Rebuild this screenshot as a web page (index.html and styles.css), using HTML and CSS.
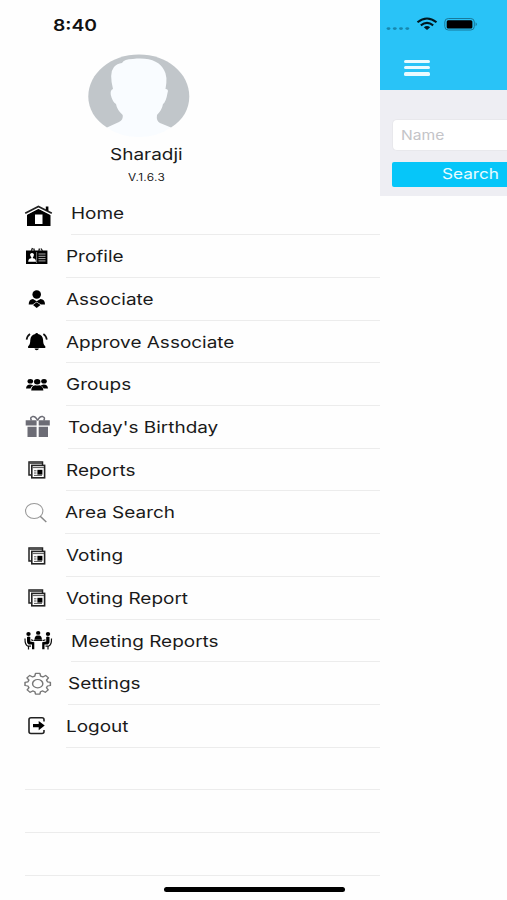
FILE: index.html
```html
<!DOCTYPE html>
<html lang="en">
<head>
    <meta charset="UTF-8">
    <meta name="viewport" content="width=device-width, initial-scale=1.0">
    <title>Menu</title>
    <link rel="stylesheet" href="styles.css">
</head>
<body>
    <!-- Shared icon for the report rows -->
    <svg class="defs" width="0" height="0">
        <symbol id="icon-report" viewBox="0 0 30 30">
            <path d="M7 20H5V7h13.5v3" fill="none" stroke="#222" stroke-width="1.5"/>
            <path d="M5 8.3h13" stroke="#444" stroke-width="1.2"/>
            <rect x="7.8" y="10.4" width="12.8" height="12.4" fill="#fff" stroke="#222" stroke-width="1.6"/>
            <path d="M8.5 12.6h11.5M10 15.8h2.5M10 18h2.5M10 20.4h8" stroke="#555" stroke-width="1"/>
            <rect x="13.4" y="14.8" width="5" height="4.8"/>
        </symbol>
    </svg>

    <div class="app">
        <!-- Side menu -->
        <div class="sidebar">
            <div class="clock"><span class="wide">8:40</span></div>
            <div class="profile">
                <svg class="avatar" width="102" height="84" viewBox="0 0 102 84">
                    <path d="M19 73.5C7 66 .3 55 .3 42.5C.3 19 23 .5 51 .5S101.3 19 101.3 42.5C101.3 55 95 66 83 73.5z" fill="#c1c6ca"/>
                    <path d="M19 73.5L31 68Q35.5 66 34.7 61Q29 56 28 50Q24.500 48 22.800 41Q22 36 25 35Q21 19 26 13Q29 9.500 34 9Q36 5 45 5C62 3 72 8 76 16Q80 22 77.500 35Q81 35 79.500 39Q78 48 75 50Q74 56 69 61Q68 67 72 69L83 73.500Q69 83 51 83Q32 83 19 73.500z" fill="#f9fcff"/>
                </svg>
                <div class="name"><span class="wide">Sharadji</span></div>
                <div class="version"><span class="wide">V.1.6.3</span></div>
            </div>

            <ul class="menu">
                <li class="large">
                    <svg class="icon" viewBox="0 0 30 30">
                        <path d="M3 15.500L14.400 9.500L26.500 15.500V27H3z"/>
                        <path d="M1.500 14.800L14.400 8.200L27.500 14.800" fill="none" stroke="#fff" stroke-width="3"/>
                        <path d="M1.200 14.300L14.400 7.400L27.800 14.300" fill="none" stroke="#222" stroke-width="1.800"/>
                        <path d="M21.800 7.500h2.600v4.700l-2.600-1.300z"/>
                        <path d="M11 15.500h7.500V25H11z" fill="#fff"/>
                    </svg>
                    <a><span class="wide">Home</span></a>
                </li>
                <li>
                    <svg class="icon" viewBox="0 0 30 30">
                        <path d="M2 9.500h21.400v13.500H2z"/>
                        <path d="M7.300 10l1.200-3M10.500 10L9.700 7.500M14.800 10l.7-2.500M18.500 10L17 7.500" stroke="#222" stroke-width="1.400"/>
                        <path d="M4.200 20.800q0-3.300 3-3.600l.2-.8q-1.700-1.600-1.200-3.500q1.800-2 3.600 0q.4 2-1 3.500l.2.800q3 .4 3 3.600z" fill="#fff"/>
                        <path d="M14.500 13h7M14.500 15.300h7M14.500 17.600h7M14.500 19.900h7" stroke="#aaa" stroke-width="1"/>
                        <path d="M12.600 11v11" stroke="#aaa" stroke-width=".7"/>
                    </svg>
                    <a><span class="wide">Profile</span></a>
                </li>
                <li>
                    <svg class="icon" viewBox="0 0 30 30">
                        <ellipse cx="12.700" cy="10.500" rx="4.300" ry="4.200"/>
                        <path d="M9 14.900L12.700 17.300L16.500 14.900Q21 15.200 21 20.600H17L12.700 17.800L8.500 20.600H4.700Q4.700 15.200 9 14.900z"/>
                        <path d="M12.700 18.300L16.500 20.900L12.700 23.900L9 20.900z"/>
                    </svg>
                    <a><span class="wide">Associate</span></a>
                </li>
                <li>
                    <svg class="icon" viewBox="0 0 30 30">
                        <path d="M12.700 6q1.300 0 1.400 1.100q4.700 1 5 5.900q0 4.700 2.200 6.300V21H4.100v-1.700Q6.300 17.700 6.300 13q.3-4.900 5-5.900q.1-1.100 1.400-1.100zM10.500 21.500h4.400q-.4 1.700-2.200 1.700t-2.200-1.700z"/>
                        <path d="M6 7Q3 9 2.600 12.700M19.400 7Q22.400 9 22.800 12.700" fill="none" stroke="#111" stroke-width="1.700"/>
                    </svg>
                    <a><span class="wide">Approve Associate</span></a>
                </li>
                <li>
                    <svg class="icon" viewBox="0 0 30 30">
                        <ellipse cx="6.300" cy="11.300" rx="2.800" ry="2.300"/>
                        <ellipse cx="20" cy="11.300" rx="2.800" ry="2.300"/>
                        <ellipse cx="13.200" cy="11.700" rx="3.200" ry="2.700"/>
                        <path d="M2 18.400q.3-3.700 4.300-3.900l3 .7Q7 16.400 6.500 18.400zM24 18.400q-.3-3.700-4.300-3.900l-3 .7q2.300 1.200 2.800 3.200zM7.200 20.400q.3-4.700 4-5.200q2 .7 4 0q3.700.5 4.200 5.200z"/>
                    </svg>
                    <a><span class="wide">Groups</span></a>
                </li>
                <li class="medium">
                    <svg class="icon" viewBox="0 0 30 30">
                        <path d="M1.700 8.300h10.900v5.100H1.700zM14.700 8.300H25.800v5.100H14.700zM3.500 14.800h9.100v10.300H3.500zM14.700 14.800H24v10.300h-9.300z" fill="#6c6c75"/>
                        <path d="M13.600 8.500Q11.500 4 8.500 4.600Q5.500 5.500 7.500 8.500M13.600 8.500Q15.700 4 18.700 4.600Q21.700 5.500 19.700 8.500" fill="none" stroke="#6c6c75" stroke-width="1.500"/>
                    </svg>
                    <a><span class="wide">Today's Birthday</span></a>
                </li>
                <li>
                    <svg class="icon"><use href="#icon-report"/></svg>
                    <a><span class="wide">Reports</span></a>
                </li>
                <li class="small">
                    <svg class="icon" viewBox="0 0 30 30">
                        <ellipse cx="10.200" cy="13" rx="8.700" ry="7.500" fill="none" stroke="#999" stroke-width="1.100"/>
                        <path d="M16.200 18.300L22.300 24" stroke="#888" stroke-width="1.500"/>
                    </svg>
                    <a><span class="wide">Area Search</span></a>
                </li>
                <li>
                    <svg class="icon"><use href="#icon-report"/></svg>
                    <a><span class="wide">Voting</span></a>
                </li>
                <li>
                    <svg class="icon"><use href="#icon-report"/></svg>
                    <a><span class="wide">Voting Report</span></a>
                </li>
                <li class="large">
                    <svg class="icon" viewBox="0 0 30 30">
                        <ellipse cx="4.500" cy="8" rx="2.200" ry="1.900"/>
                        <ellipse cx="14.200" cy="6.900" rx="2.200" ry="1.900"/>
                        <ellipse cx="24" cy="8" rx="2.200" ry="1.900"/>
                        <path d="M10.500 13.700q.2-4 2.400-4.300h2.600q2.200.3 2.400 4.300z"/>
                        <path d="M3 11q2-1 3.300 0V15.500l4 .8v7H8V18.500H4.700Q2.700 18 3 15zM25.500 11q-2-1-3.300 0V15.500l-4 .8v7h2.300V18.500h3.300q2-.5 1.700-3.500z"/>
                        <path d="M1 12.500Q.8 19.200 4 20.200H7M4.500 20v3.500M27.500 12.500Q27.700 19.200 24.500 20.200h-3M24 20v3.500M7 13.800l2.500.8M21.500 13.800l-2.500.8M10 14.400h8.500" fill="none" stroke="#111" stroke-width="1.200"/>
                    </svg>
                    <a><span class="wide">Meeting Reports</span></a>
                </li>
                <li class="medium">
                    <svg class="icon" viewBox="0 0 30 30">
                        <g fill="none" stroke="#777" stroke-width="1.200" stroke-linejoin="round" transform="translate(13.700 14.700) scale(1.220 1)">
                            <path d="M-1.800-10.300H1.800L2.400-7.600L4.200-6.800L6.500-8.300L8.800-5.900L7.200-3.600L8-1.900L10.400-1.400V1.800L8 2.300L7.200 4L8.600 6.200L6.200 8.600L4.100 7.200L2.300 8L1.800 10.400H-1.800L-2.300 8L-4.100 7.200L-6.200 8.600L-8.600 6.200L-7.200 4L-8 2.300L-10.400 1.800V-1.400L-8-1.900L-7.200-3.600L-8.800-5.900L-6.500-8.300L-4.200-6.800L-2.400-7.600z"/>
                            <circle r="4.200"/>
                        </g>
                    </svg>
                    <a><span class="wide">Settings</span></a>
                </li>
                <li>
                    <svg class="icon" viewBox="0 0 30 30">
                        <path d="M20 10.500V8.500Q20 6.800 18 6.800H7Q5 6.800 5 8.500V20.500Q5 22.500 7 22.500h11q2 0 2-2v-1.500" fill="none" stroke="#222" stroke-width="1.600"/>
                        <path d="M9 12.900h5.700v-2.900l6 4.600l-6 4.600v-2.900H9z"/>
                    </svg>
                    <a><span class="wide">Logout</span></a>
                </li>
                <li class="empty"></li>
                <li class="empty"></li>
                <li class="empty"></li>
            </ul>
        </div>

        <!-- Page that is pushed aside by the menu -->
        <div class="page">
            <div class="header">
                <svg class="status" width="94" height="18" viewBox="0 0 94 18">
                    <g fill="#1787ad">
                        <ellipse cx="2.500" cy="13.600" rx="1.900" ry="1.400"/>
                        <ellipse cx="8.800" cy="13.600" rx="1.900" ry="1.400"/>
                        <ellipse cx="15" cy="13.600" rx="1.900" ry="1.400"/>
                        <ellipse cx="21.300" cy="13.600" rx="1.900" ry="1.400"/>
                    </g>
                    <path d="M31.500 7.300Q41 -.3 50.500 7.300M34.800 10.300Q41 5.600 47.200 10.300" fill="none" stroke="#001820" stroke-width="2.100"/>
                    <path d="M37.800 12.200Q41 9.900 44.200 12.200L41 15z" fill="#001820"/>
                    <rect x="58.800" y="3.500" width="29.500" height="11.500" rx="3.500" fill="none" stroke="#17799b"/>
                    <rect x="60.700" y="5.200" width="25.700" height="8.200" rx="1.500"/>
                    <path d="M89.600 7.200q2.500 2 0 4z" fill="#17799b"/>
                </svg>
                <div class="burger"><i></i><i></i><i></i></div>
            </div>
            <div class="search-form">
                <div class="field"><span class="wide">Name</span></div>
                <div class="search-btn"><span class="wide">Search</span></div>
            </div>
        </div>
    </div>

    <div class="home-indicator"></div>
</body>
</html>
```
FILE: styles.css
```css
body {
    margin: 0;
    background: #fefefe;
    font-family: Inter, "Liberation Sans", sans-serif;
    color: #1a1a1a;
    height: 900px;
    overflow: hidden;
}

.defs {
    position: absolute;
}

.app {
    display: flex;
    height: 900px;
}

/* Stretched lettering */
.wide {
    display: inline-block;
    transform: scaleX(1.185);
    transform-origin: left center;
    white-space: nowrap;
}

/* Side menu */
.sidebar {
    width: 380px;
    flex-shrink: 0;
}

.clock {
    height: 53.5px;
    padding: 15px 0 0 53px;
    box-sizing: border-box;
    font-size: 16.3px;
    line-height: 20px;
    font-weight: 600;
    color: #111;
}

.profile {
    height: 138.9px;
    box-sizing: border-box;
}

.avatar {
    display: block;
    margin-left: 88px;
}

.name {
    margin: 5.5px 0 0 110px;
    font-size: 16px;
    line-height: 22px;
}

.version {
    margin: 5px 0 0 128px;
    font-size: 10px;
    line-height: 14px;
    letter-spacing: 0.3px;
}

.menu {
    list-style: none;
    margin: 0;
    padding: 0 0 0 24px;
}

.menu li {
    display: flex;
    align-items: center;
    height: 42.72px;
}

.icon {
    width: 30px;
    height: 30px;
    flex-shrink: 0;
    margin-right: 12px;
}

.menu a {
    flex: 1;
    height: 100%;
    box-sizing: border-box;
    border-bottom: 1px solid #ececec;
    font-size: 16px;
    line-height: 43px;
}

.large .icon {
    margin-right: 16.5px;
}

.medium .icon {
    margin-right: 14.3px;
}

.small .icon {
    margin-right: 11px;
}

.menu .empty {
    box-sizing: border-box;
    margin-left: 1px;
    border-bottom: 1px solid #ececec;
}

/* Page on the right */
.page {
    flex: 1;
    overflow: hidden;
}

.header {
    height: 90px;
    background: #29c3f7;
    box-sizing: border-box;
    padding: 15px 0 0 6px;
}

.status {
    display: block;
}

.burger {
    display: flex;
    flex-direction: column;
    gap: 2.7px;
    margin: 27px 0 0 18px;
    width: 26px;
}

.burger i {
    height: 3.4px;
    border-radius: 1.5px;
    background: #eafaff;
}

.search-form {
    height: 106px;
    box-sizing: border-box;
    padding: 29px 0 0 12px;
    background: #eeeef3;
}

.field {
    height: 32px;
    box-sizing: border-box;
    padding-left: 8px;
    border: 1px solid #e8e8ec;
    border-right: none;
    border-radius: 5px 0 0 5px;
    background: #fff;
    color: #c4c4c8;
    font-size: 13.2px;
    line-height: 31px;
}

.search-btn {
    height: 25px;
    margin-top: 10.5px;
    padding-left: 50px;
    border-radius: 2px 0 0 2px;
    background: #06c6f9;
    color: #e9fbff;
    font-size: 14.5px;
    line-height: 24px;
}

.home-indicator {
    position: absolute;
    left: 163.5px;
    top: 887px;
    width: 181px;
    height: 5px;
    border-radius: 3px;
    background: #000;
}
```
